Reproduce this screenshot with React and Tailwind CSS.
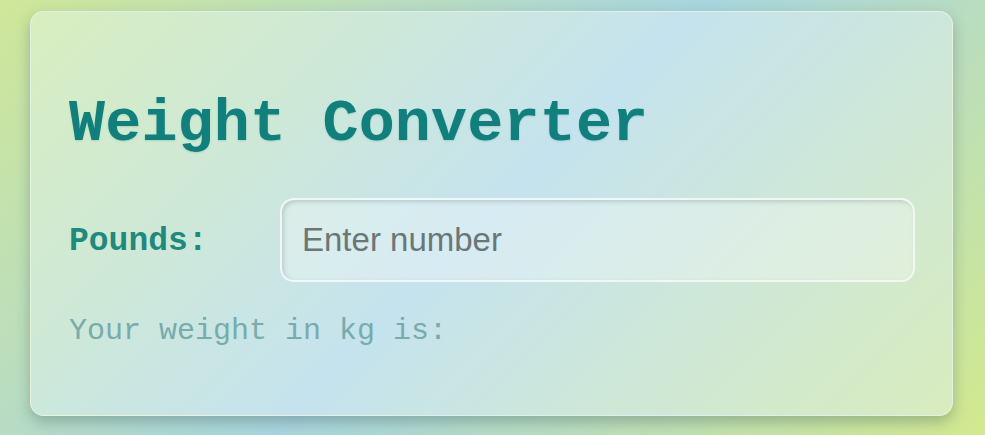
import React from "react";

export default function App() {
  return (
    <div className="w-[985px] h-[435px] overflow-hidden bg-[linear-gradient(135deg,#cfe798_0%,#a8d5df_50%,#d2e98e_100%)] pt-[11px] pl-[30px]">
      <div className="w-[923px] h-[405px] rounded-[14px] bg-[linear-gradient(135deg,#d8eebf_0%,#c5e3ee_50%,#d8ecbd_100%)] border border-white/40 shadow-[0_6px_14px_rgba(60,90,90,0.35)] pl-[38px] pr-[37px] flex flex-col">
        <h1 className="mt-[82px] h-[60px] leading-[60px] text-[60px] font-bold text-[#0f807c] tracking-[0.2px] [font-family:'Liberation_Mono',monospace] [text-shadow:0_1px_2px_rgba(0,80,80,0.15)]">
          Weight Converter
        </h1>
        <div className="mt-[44px] flex items-center">
          <label className="w-[211px] shrink-0 text-[33px] font-bold text-[#1e8a7c] [font-family:'Liberation_Mono',monospace] leading-none pt-[2px]">
            Pounds:
          </label>
          <input
            type="text"
            placeholder="Enter number"
            className="flex-1 h-[84px] rounded-[14px] bg-white/30 border-2 border-white/60 shadow-[inset_2px_2px_4px_rgba(80,110,110,0.25)] px-[20px] text-[33px] text-[#5f6b6b] placeholder:text-[#6b7676] outline-none [font-family:'Liberation_Sans',Arial,sans-serif]"
          />
        </div>
        <p className="mt-[34px] text-[30px] leading-none text-[#78abab] [font-family:'Liberation_Mono',monospace]">
          Your weight in kg is:
        </p>
      </div>
    </div>
  );
}
